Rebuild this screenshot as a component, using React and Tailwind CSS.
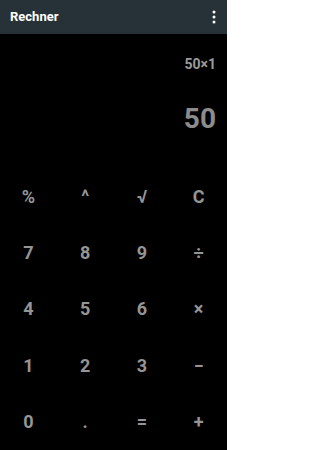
import React from "react";

export default function App() {
  const keys = [
    "%", "^", "√", "C",
    "7", "8", "9", "÷",
    "4", "5", "6", "×",
    "1", "2", "3", "−",
    "0", ".", "=", "+",
  ];

  return (
    <div className="w-[227px] h-[450px] bg-black flex flex-col overflow-hidden font-['Roboto',sans-serif]">
      {/* toolbar */}
      <div className="h-[34px] bg-[#263238] flex items-center justify-between pl-[10px] pr-[10px]">
        <span className="text-white text-[13px] font-bold">Rechner</span>
        <svg width="6" height="14" viewBox="0 0 6 14">
          <circle cx="3" cy="2" r="1.5" fill="#fff" />
          <circle cx="3" cy="7" r="1.5" fill="#fff" />
          <circle cx="3" cy="12" r="1.5" fill="#fff" />
        </svg>
      </div>

      {/* display */}
      <div className="h-[134px] flex flex-col items-end pr-[11px] pt-[22px]">
        <p className="text-[14px] leading-[17px] font-bold text-[#9a9a9a]">50×1</p>
        <p className="mt-[29px] text-[28px] leading-[34px] font-bold text-[#8c8c8c]">50</p>
      </div>

      {/* keypad */}
      <div className="flex-1 grid grid-cols-4 grid-rows-5">
        {keys.map((k, i) => (
          <button
            key={i}
            className="flex items-center justify-center text-[18px] font-bold text-[#959595]"
          >
            {k}
          </button>
        ))}
      </div>
    </div>
  );
}
